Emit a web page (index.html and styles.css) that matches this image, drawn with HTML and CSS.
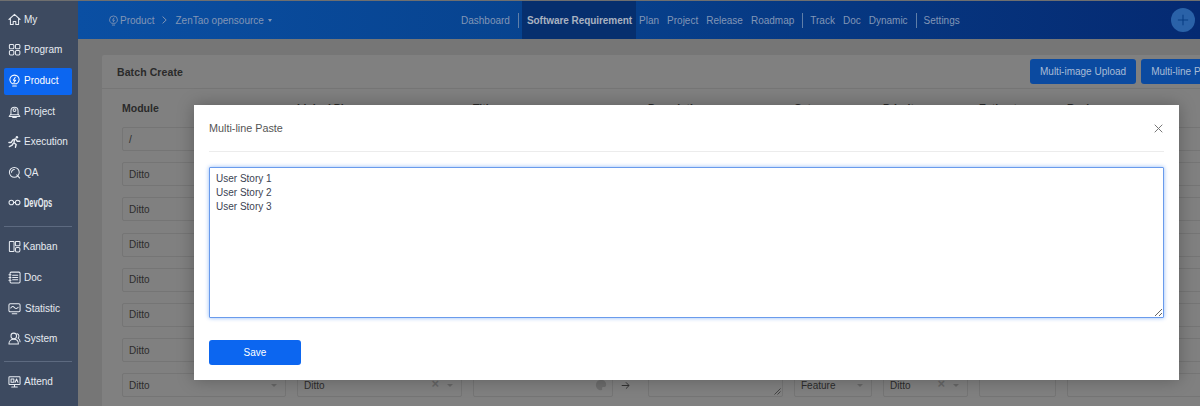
FILE: index.html
```html
<!DOCTYPE html>
<html lang="en">
<head>
<meta charset="utf-8">
<title>Batch Create</title>
<link rel="stylesheet" href="styles.css">
</head>
<body>
<div class="app">
  <aside class="sidebar">
    <nav class="menu">
      <a class="item"><svg class="ico" viewBox="0 0 14 14"><path d="M1 7 7 1.500 13 7M2.600 6v6.500h3V9.200h2.800v3.300h3V6"/></svg><span>My</span></a>
      <a class="item"><svg class="ico" viewBox="0 0 14 14"><rect x="1.500" y="1.500" width="4.800" height="4.800" rx="1.200"/><rect x="8" y="1.500" width="4.800" height="4.800" rx="1.200"/><rect x="1.500" y="8" width="4.800" height="4.800" rx="1.200"/><rect x="8" y="8" width="4.800" height="4.800" rx="1.200"/></svg><span>Program</span></a>
      <a class="item active"><svg class="ico" viewBox="0 0 14 14"><path d="M4.700 10.500C3 9.500 2 8 2 6.200a5 5 0 0 1 10 0c0 1.800-1 3.300-2.700 4.300ZM5 12.800h4M7.800 3.500 5.800 6.700h2.400L6.400 9"/></svg><span>Product</span></a>
      <a class="item"><svg class="ico" viewBox="0 0 14 14"><path d="M3.200 10.500V6.300a3.800 3.800 0 0 1 7.600 0v4.200ZM1.300 12.300 3.200 9.500M12.700 12.300 10.800 9.500M1.300 12.300h11.400M5 13.500h4"/><circle cx="7" cy="5.500" r="1.500"/></svg><span>Project</span></a>
      <a class="item"><svg class="ico" viewBox="0 0 14 14"><circle cx="9.600" cy="2.400" r="1.300" class="fill"/><path d="M1 8h2.500l1.700-2.700L8 4.200l2 2.500h2.800M7 5l-.6 3.500 2.400 1.700-.8 3M5.800 8.800 4.500 11 1.500 12.500" class="thick"/></svg><span>Execution</span></a>
      <a class="item"><svg class="ico" viewBox="0 0 14 14"><circle cx="6.800" cy="6.800" r="5.300"/><path d="M9.500 9.500 12.600 13M3.800 6.800A3 3 0 0 1 6.800 3.800"/></svg><span>QA</span></a>
      <a class="item"><svg class="ico" viewBox="0 0 14 14"><circle cx="3.600" cy="7" r="2.500"/><circle cx="10.400" cy="7" r="2.500"/><path d="M6.100 7h1.800"/></svg><span class="narrow">DevOps</span></a>
      <hr class="rule first">
      <a class="item tight"><svg class="ico" viewBox="0 0 14 14"><rect x="1.500" y="1.500" width="5" height="11" rx=".6"/><rect x="8" y="1.500" width="4.800" height="4.800" rx=".6"/><rect x="8" y="8" width="4.800" height="4.800" rx="1.500"/></svg><span>Kanban</span></a>
      <a class="item"><svg class="ico" viewBox="0 0 14 14"><rect x="2.200" y="1.200" width="10.800" height="11.600" rx="1.300"/><path d="M5 4.500h5.500M5 7h5.500M5 9.500h5.500M1 4h2.200M1 7h2.200M1 10h2.200"/></svg><span>Doc</span></a>
      <a class="item wide"><svg class="ico" viewBox="0 0 14 14"><rect x="1" y="1.800" width="12" height="8.800" rx="1.400"/><path d="M3 6.500C4.500 4.500 5.500 4.500 7 6s2.500 1.500 4-.3M4.500 12.600h5"/></svg><span>Statistic</span></a>
      <a class="item"><svg class="ico" viewBox="0 0 14 14"><circle cx="6.200" cy="4.200" r="3"/><path d="M1 12.800c0-3 2-5 5.200-5s5 2 5 5ZM9.800 1.800a2.800 2.800 0 0 1 1 4.800c1.300.7 2.200 2.200 2.200 4"/></svg><span>System</span></a>
      <hr class="rule second">
      <a class="item"><svg class="ico" viewBox="0 0 14 14"><rect x="1" y="1.800" width="12" height="8.500" rx=".8"/><path d="M7 10.300v2.400M4 12.800h6M3.300 4.300h3v3.500h-3ZM7.700 7.800 9.200 4.300l1.500 3.500"/></svg><span>Attend</span></a>
    </nav>
  </aside>

  <div class="workspace">
    <header class="topbar">
      <div class="crumbs">
        <svg class="crumb-ico" viewBox="0 0 14 14"><path d="M4.700 10.500C3 9.500 2 8 2 6.200a5 5 0 0 1 10 0c0 1.800-1 3.300-2.700 4.300ZM5 12.800h4M7.800 3.500 5.800 6.700h2.400L6.400 9"/></svg>
        <span class="crumb">Product</span>
        <svg class="chev" viewBox="0 0 5 8"><path d="M.6.600 4.200 4 .6 7.400"/></svg>
        <span class="crumb">ZenTao opensource</span>
        <i class="caret"></i>
      </div>
      <nav class="tabs">
        <a class="tab">Dashboard</a>
        <i class="sep"></i>
        <a class="tab current">Software Requirement</a>
        <a class="tab">Plan</a>
        <a class="tab">Project</a>
        <a class="tab">Release</a>
        <a class="tab">Roadmap</a>
        <i class="sep"></i>
        <a class="tab">Track</a>
        <a class="tab">Doc</a>
        <a class="tab">Dynamic</a>
        <i class="sep"></i>
        <a class="tab">Settings</a>
      </nav>
      <button class="plus"><svg viewBox="0 0 14 14"><path d="M7 1v12M1 7h12"/></svg></button>
    </header>

    <main class="content">
      <section class="card">
        <div class="card-head">
          <h2>Batch Create</h2>
          <div class="actions">
            <button class="btn">Multi-image Upload</button>
            <button class="btn">Multi-line Paste</button>
          </div>
        </div>
        <div class="grid">
          <div class="row labels">
            <b>Module</b><b>Linked Plan</b><b>Title</b><b>Description</b><b>Category</b><b>Priority</b><b>Estimate</b><b>Review</b>
          </div>
          <div class="row"><div class="field">/</div><div class="field"></div><div class="field"></div><div class="arrow"></div><div class="field"></div><div class="field"></div><div class="field"></div><div class="field"></div><div class="field"></div></div>
          <div class="row"><div class="field">Ditto</div><div class="field"></div><div class="field"></div><div class="arrow"></div><div class="field"></div><div class="field"></div><div class="field"></div><div class="field"></div><div class="field"></div></div>
          <div class="row"><div class="field">Ditto</div><div class="field"></div><div class="field"></div><div class="arrow"></div><div class="field"></div><div class="field"></div><div class="field"></div><div class="field"></div><div class="field"></div></div>
          <div class="row"><div class="field">Ditto</div><div class="field"></div><div class="field"></div><div class="arrow"></div><div class="field"></div><div class="field"></div><div class="field"></div><div class="field"></div><div class="field"></div></div>
          <div class="row"><div class="field">Ditto</div><div class="field"></div><div class="field"></div><div class="arrow"></div><div class="field"></div><div class="field"></div><div class="field"></div><div class="field"></div><div class="field"></div></div>
          <div class="row"><div class="field">Ditto</div><div class="field"></div><div class="field"></div><div class="arrow"></div><div class="field"></div><div class="field"></div><div class="field"></div><div class="field"></div><div class="field"></div></div>
          <div class="row"><div class="field">Ditto</div><div class="field"></div><div class="field"></div><div class="arrow"></div><div class="field"></div><div class="field"></div><div class="field"></div><div class="field"></div><div class="field"></div></div>
          <div class="row">
            <div class="field">Ditto<i class="mini-caret"></i></div>
            <div class="field">Ditto<span class="clear">×</span><i class="mini-caret"></i></div>
            <div class="field"><svg class="palette" viewBox="0 0 14 14"><path d="M7 1a6 6 0 1 0 0 12c1.500 0 1.800-1 1.300-1.800-.5-1 .1-1.900 1.200-1.900H11c1.300 0 2-1 2-2.300C13 3.500 10.500 1 7 1Z"/></svg></div>
            <div class="arrow"><svg viewBox="0 0 10 10"><path d="M.8 5h8M5.500 1.500 9 5 5.500 8.500"/></svg></div>
            <div class="field"><svg class="grip" viewBox="0 0 7 7"><path d="M.5 6.500 6.500.5M3.500 6.500l3-3"/></svg></div>
            <div class="field">Feature<i class="mini-caret"></i></div>
            <div class="field">Ditto<span class="clear">×</span><i class="mini-caret"></i></div>
            <div class="field"></div>
            <div class="field"></div>
          </div>
        </div>
      </section>
    </main>
  </div>

  <div class="modal" role="dialog">
    <div class="modal-head">
      <span class="modal-title">Multi-line Paste</span>
      <svg class="close" viewBox="0 0 9 9"><path d="M.7.700l7.600 7.600M8.300.700.700 8.300"/></svg>
    </div>
    <textarea class="paste">User Story 1
User Story 2
User Story 3</textarea>
    <button class="save">Save</button>
  </div>
</div>
</body>
</html>
```
FILE: styles.css
```css
* { box-sizing: border-box; }
html, body { margin: 0; padding: 0; height: 100%; overflow: hidden; }
body { font-family: "Liberation Sans", Arial, sans-serif; font-size: 10px; color: #282828; background: #767676; }
.app { position: relative; display: flex; width: 1200px; height: 406px; overflow: hidden; border-top: 1px solid #6f6f6f; }

.sidebar { flex: 0 0 78px; min-width: 0; background: #3d4a60; color: #e6eaf0; }
.menu { display: flex; flex-direction: column; padding: 5.800px 6px 0 4px; }
.item { display: flex; align-items: center; gap: 3px; height: 27px; margin-bottom: 3.600px; padding: 0 0 2px 4px; border-radius: 2px; white-space: nowrap; }
.item.tight { gap: 2px; }
.item.wide { gap: 4px; }
.item.active { background: #0c66f0; color: #fff; }
.ico { flex: none; width: 13px; height: 13px; fill: none; stroke: #e8ecf2; stroke-width: 1.100; stroke-linejoin: round; stroke-linecap: round; }
.ico .fill { fill: #e8ecf2; stroke: none; }
.ico .thick { stroke-width: 1.500; }
.active .ico { stroke: #fff; }
.narrow { display: inline-block; font-size: 12px; font-weight: 700; transform: scaleX(.62); transform-origin: left center; }
.rule { flex: none; height: 1px; width: 68px; margin: 0; border: 0; background: #5d6a80; }
.rule.first { margin-top: 5px; margin-bottom: 7.500px; }
.rule.second { margin-top: 4.500px; margin-bottom: 6.500px; }

.workspace { flex: 1; min-width: 0; display: flex; flex-direction: column; }
.topbar { flex: 0 0 38px; display: flex; align-items: center; padding-left: 30px; background: linear-gradient(90deg, #0a4fa3 0%, #07438f 40%, #052a72 100%); color: #8296b6; }
.crumbs { display: flex; align-items: center; flex: 0 0 353px; }
.crumb-ico { width: 11px; height: 11px; margin-right: 1px; fill: none; stroke: #8296b6; stroke-width: 1.100; }
.crumb { white-space: nowrap; }
.chev { width: 5px; height: 8px; margin: 0 8px; fill: none; stroke: #8296b6; }
.caret { width: 0; height: 0; margin-left: 4px; border: 2.500px solid transparent; border-top: 3px solid #8296b6; border-bottom: 0; }
.tabs { display: flex; align-items: stretch; height: 38px; }
.tab { display: flex; align-items: center; margin-right: 8px; white-space: nowrap; }
.tab.current { margin: 0 3px 0 -4px; padding: 0 4px 0 5px; background: #062f6e; color: #a9b2c0; font-weight: 700; letter-spacing: -.05px; }
.sep { align-self: center; width: 1px; height: 15px; margin-right: 7px; background: #5f7ea8; }
.plus { flex: none; width: 24px; height: 24px; margin-left: auto; margin-right: 5px; padding: 6px; border: 0; border-radius: 50%; background: #2a62a8; }
.plus svg { display: block; width: 12px; height: 12px; fill: none; stroke: #063c82; stroke-width: 1.200; }

.content { flex: 1; padding: 16px 0 0 24px; background: #767676; overflow: hidden; }
.card { width: 1120px; height: 360px; background: #808080; border-radius: 2px; }
.card-head { display: flex; align-items: center; justify-content: flex-start; height: 34px; padding: 0 0 0 15px; border-bottom: 1px solid #767676; }
.card-head h2 { margin: 0 auto 0 0; font-size: 10.500px; font-weight: 700; color: #2a2a2a; letter-spacing: .1px; }
.actions { display: flex; gap: 5px; flex: none; width: 200px; margin-right: -8px; }
.btn { flex: none; height: 25px; padding: 0 10px; border: 0; border-radius: 3px; background: #0b4aa0; color: #a8bcd6; font: 10px "Liberation Sans", sans-serif; white-space: nowrap; }
.grid { padding: 9px 0 0 20px; }
.row { display: grid; grid-template-columns: 164px 165px 140px 13px 135px 78px 85px 77px 153px; column-gap: 11px; height: 35.200px; }
.labels { height: 29px; grid-template-columns: 164px 165px 164px 135px 78px 85px 77px 153px; align-items: start; padding-top: 4px; }
.labels b { color: #2a2a2a; font-size: 10.500px; font-weight: 700; white-space: nowrap; }
.field { position: relative; display: flex; align-items: center; height: 24px; padding: 0 6px; border: 1px solid #757575; border-radius: 2px; background: #808080; color: #2c2c2c; }
.arrow { display: flex; align-items: center; height: 24px; }
.arrow svg { flex: none; width: 9px; height: 9px; margin-left: -3px; fill: none; stroke: #2a2a2a; stroke-width: 1; }
.mini-caret { position: absolute; right: 8px; top: 10px; width: 0; height: 0; border: 3px solid transparent; border-top: 3px solid #666; border-bottom: 0; }
.clear { position: absolute; right: 22px; top: 1px; color: #666; font-size: 13px; line-height: 18px; font-weight: 700; }
.palette { position: absolute; right: 5px; top: 5px; width: 12px; height: 12px; fill: #6c6c6c; }
.grip { position: absolute; right: 1px; bottom: 1px; width: 7px; height: 7px; fill: none; stroke: #333; stroke-width: .8; }

.modal { position: absolute; left: 194px; top: 104px; display: flex; flex-direction: column; align-items: flex-start; width: 985px; height: 275px; padding: 0 15px; background: #fff; box-shadow: 0 0 16px rgba(0, 0, 0, .28); }
.modal-head { display: flex; align-items: center; justify-content: space-between; width: 100%; height: 47px; border-bottom: 1px solid #ececec; }
.modal-title { font-size: 10.800px; color: #555; }
.close { width: 9px; height: 9px; margin-right: 1px; fill: none; stroke: #777; stroke-width: 1; }
.paste { display: block; width: 955px; height: 151px; margin: 15px 0 22px; padding: 4px 6px; border: 1px solid #6a9bec; border-radius: 1px; box-shadow: 0 0 4px rgba(12, 102, 240, .45); outline: 0; color: #3c4353; font: 10px/14px "Liberation Sans", sans-serif; }
.save { width: 92px; height: 25px; border: 0; border-radius: 3px; background: #0c66f0; color: #fff; font: 10px "Liberation Sans", sans-serif; }
```
